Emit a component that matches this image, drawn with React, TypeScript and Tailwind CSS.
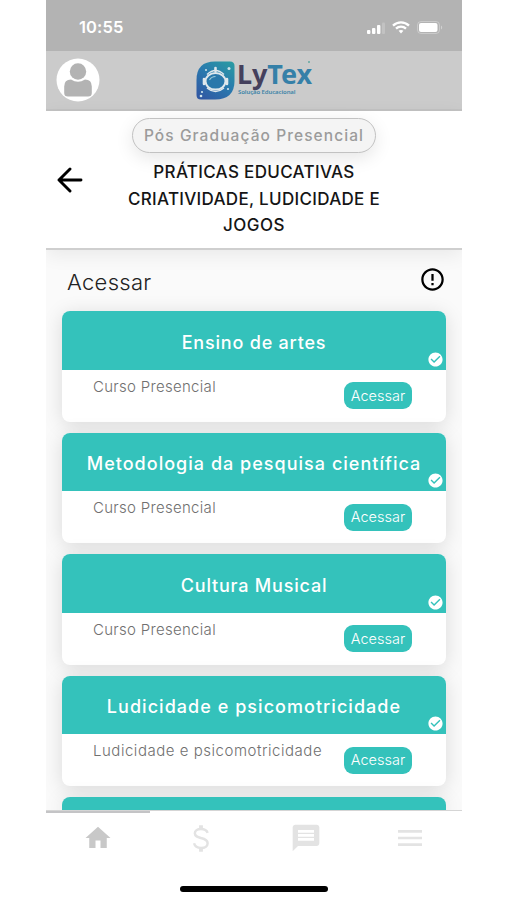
import React from 'react';
import { MdHome, MdMessage, MdErrorOutline, MdCheckCircle, MdMenu } from 'react-icons/md';

interface Course {
  title: string;
  titleClass: string;
  description: string;
  descriptionClass: string;
}

const courses: Course[] = [
  {
    title: 'Ensino de artes',
    titleClass: 'tracking-[0.8px]',
    description: 'Curso Presencial',
    descriptionClass: 'tracking-[0.3px]',
  },
  {
    title: 'Metodologia da pesquisa científica',
    titleClass: 'tracking-[1.02px]',
    description: 'Curso Presencial',
    descriptionClass: 'tracking-[0.3px]',
  },
  {
    title: 'Cultura Musical',
    titleClass: 'tracking-[0.8px]',
    description: 'Curso Presencial',
    descriptionClass: 'tracking-[0.3px]',
  },
  {
    title: 'Ludicidade e psicomotricidade',
    titleClass: 'tracking-[1.04px]',
    description: 'Ludicidade e psicomotricidade',
    descriptionClass: 'tracking-[0.53px]',
  },
];

const StatusBar: React.FC = () => (
  <div className="flex h-[51px] shrink-0 items-center justify-between bg-[#b3b3b3] pt-[4px] pl-[33px] pr-[19px] text-white">
    <span className="text-[16.5px] font-semibold leading-none tracking-[0.1px]">10:55</span>
    <div className="flex items-center gap-[7px]">
      <svg className="h-[12px] w-[18px]" viewBox="0 0 18 12" fill="currentColor">
        <rect x="0" y="8" width="3.4" height="4" rx="1" />
        <rect x="5" y="6" width="3.4" height="6" rx="1" />
        <rect x="10" y="3" width="3.4" height="9" rx="1" />
        <rect x="15" y="0.5" width="3" height="11.5" rx="1" opacity="0.2" />
      </svg>
      <svg className="h-[13px] w-[18px]" viewBox="0 0 18 13" fill="none" stroke="currentColor" strokeWidth="2.3">
        <path d="M1 4.6C5.5 0.2 12.5 0.2 17 4.6" />
        <path d="M4 7.7C6.8 5 11.2 5 14 7.7" />
        <path d="M6.6 9.8C8 8.6 10 8.6 11.4 9.8L9 12.4Z" fill="currentColor" stroke="none" />
      </svg>
      <svg className="h-[13px] w-[26px]" viewBox="0 0 26 13">
        <rect x="0.5" y="0.5" width="22" height="12" rx="3.5" fill="none" stroke="#fff" opacity="0.3" />
        <rect x="2" y="2" width="18.5" height="9" rx="2" fill="#fff" />
        <path d="M24 4.5C25.6 5 25.6 8 24 8.5Z" fill="#fff" opacity="0.4" />
      </svg>
    </div>
  </div>
);

const Logo: React.FC = () => (
  <div className="flex gap-[2px]">
    <svg className="h-[39px] w-[39px]" viewBox="0 0 39 39">
      <defs>
        <linearGradient id="badge" x1="0.9" y1="0" x2="0.2" y2="1">
          <stop offset="0" stopColor="#2a9aa3" />
          <stop offset="0.5" stopColor="#2a79ae" />
          <stop offset="1" stopColor="#3159a3" />
        </linearGradient>
      </defs>
      <path d="M19 0.5H34Q38.5 0.5 38.5 5V20Q38.5 38.5 19 38.5H5Q0.5 38.5 0.5 34V19Q0.5 0.5 19 0.5Z" fill="url(#badge)" />
      <path d="M19.5 7V10" stroke="#dfe7ec" strokeWidth="2.6" strokeLinecap="round" />
      <path d="M11 13.5Q19.5 5.5 28 13.5M11 27Q19.5 34 28 27" fill="none" stroke="#dfe7ec" strokeWidth="1.5" />
      <ellipse cx="19.5" cy="20.3" rx="10" ry="8.3" fill="#2a78ab" stroke="#dfe7ec" strokeWidth="2" />
      <path d="M8 18V23M31 18V23" stroke="#dfe7ec" strokeWidth="2.6" strokeLinecap="round" />
      <path d="M13.5 19Q15.5 15.5 19.5 15.5" fill="none" stroke="#9ecbd8" strokeWidth="1.1" />
      <g fill="#cfe3ea">
        <circle cx="33" cy="7.5" r="1.5" />
        <circle cx="10" cy="9" r="1" />
        <circle cx="6" cy="31" r="1.1" />
        <circle cx="5" cy="35" r="1.3" />
        <circle cx="32" cy="28" r="1.1" />
      </g>
    </svg>
    <div className="relative flex flex-col font-['Noto_Sans',sans-serif]">
      <span className="h-[27px] text-[27px] font-bold leading-[25px] tracking-[-0.1px] text-[#45405c]">
        Ly<span className="text-[#3580a8]">Tex</span>
      </span>
      <span className="pl-[1px] text-[6px] font-semibold leading-[8px] tracking-[-0.1px] text-[#3b84a8]">
        Solução Educacional
      </span>
      <span className="absolute right-[2px] top-0 h-[2px] w-[2px] rounded-full bg-[#62a8a0]" />
    </div>
  </div>
);

const Header: React.FC = () => (
  <header className="grid h-[60px] shrink-0 grid-cols-[1fr_auto_1fr] items-center border-b-2 border-[#c3c3c3] bg-[#cbcbcb] pl-[10px] pr-[10px]">
    <svg className="h-[44px] w-[44px]" viewBox="0 0 44 44">
      <circle cx="22" cy="22" r="21.5" fill="#fff" />
      <circle cx="22" cy="13.5" r="8.2" fill="#b3b3b3" />
      <path d="M8.2 35V28.5Q8.2 21.5 15 21.5Q22 26 29 21.5Q35.8 21.5 35.8 28.5V35Q35.8 38.5 32 38.5H12Q8.2 38.5 8.2 35Z" fill="#b3b3b3" />
    </svg>
    <Logo />
    <span />
  </header>
);

const PageTitle: React.FC = () => (
  <section className="relative z-10 grid h-[139px] shrink-0 grid-cols-[48px_1fr_48px] border-b-2 border-[#cfcfcf] bg-white shadow-[0_5px_18px_rgba(0,0,0,0.07)]">
    <svg className="ml-[11px] mt-[56px] h-[26px] w-[26px]" viewBox="0 0 26 26" fill="none" stroke="#000" strokeWidth="2.9" strokeLinecap="round" strokeLinejoin="round">
      <path d="M24 13H2M13 2L2 13L13 24" />
    </svg>
    <div className="flex flex-col items-center pt-[7px]">
      <div className="flex h-[35px] w-[244px] items-center justify-center rounded-full border-[1.5px] border-[#c2c2c2] bg-[#f4f4f4] text-[15.5px] font-medium tracking-[1.08px] whitespace-nowrap text-[#9b9b9b] shadow-[0_5px_18px_rgba(0,0,0,0.10)]">
        Pós Graduação Presencial
      </div>
      <h1 className="mt-[6px] text-center text-[17px] font-medium leading-[26.5px] whitespace-nowrap text-[#151515]">
        <span className="block tracking-[0.33px]">PRÁTICAS EDUCATIVAS</span>
        <span className="block tracking-[0.31px]">CRIATIVIDADE, LUDICIDADE E</span>
        <span className="block tracking-[0.5px]">JOGOS</span>
      </h1>
    </div>
  </section>
);

const CourseCard: React.FC<{ course: Course }> = ({ course }) => (
  <article className="h-[110.5px] shrink-0 overflow-hidden rounded-[8px] bg-white shadow-[0_3px_20px_rgba(0,0,0,0.13)]">
    <div className="relative flex h-[58.5px] items-center justify-center bg-[#34c2bb] pt-[4px]">
      <h2 className={`text-[18px] font-medium whitespace-nowrap text-white ${course.titleClass}`}>{course.title}</h2>
      <MdCheckCircle className="absolute right-[2px] bottom-[2px] h-[17px] w-[17px] text-white" />
    </div>
    <div className="flex items-start justify-between pl-[31px] pr-[34px]">
      <p className={`pt-[6px] text-[15px] font-light leading-[22px] whitespace-nowrap text-[#707070] ${course.descriptionClass}`}>
        {course.description}
      </p>
      <button className="mt-[12.5px] h-[27px] w-[68px] rounded-[9px] bg-[#34c2bb] text-[14.5px] font-light leading-[26px] text-white">
        Acessar
      </button>
    </div>
  </article>
);

const BottomNav: React.FC = () => (
  <nav className="relative z-10 flex h-[90px] shrink-0 flex-col items-center border-t border-[#d5d5d5] bg-white">
    <div className="h-[2px] w-[104px] self-start bg-[#c4c4c6]" />
    <div className="grid h-[50px] w-full grid-cols-4 place-items-center text-[#e3e3e3]">
      <MdHome className="h-[30px] w-[30px] text-[#c8c8c8]" />
      <svg className="mr-[3px] h-[29px] w-[18px]" viewBox="0 0 19 29" fill="none" stroke="currentColor" strokeWidth="2.6">
        <path d="M16.5 8.5C15.5 5.7 13 4.5 9.5 4.5C5.5 4.5 3 6.3 3 9C3 12.2 6 13 9.5 14C13.5 15 16.5 16.3 16.5 19.5C16.5 22.6 13.7 24.5 9.7 24.5C5.8 24.5 3 22.9 2.2 19.5" />
        <path d="M9.5 0.5V4.5M9.5 24.5V28.5" strokeWidth="4" />
      </svg>
      <MdMessage className="-mt-[1px] h-[32px] w-[32px]" />
      <MdMenu className="-mt-[1px] h-[32px] w-[32px]" />
    </div>
    <div className="mt-[23px] h-[5.5px] w-[148px] rounded-full bg-black" />
  </nav>
);

const App: React.FC = () => {
  return (
    <div className="h-[900px] w-[507px] overflow-hidden bg-white font-['Inter',sans-serif]">
      <div className="ml-[46px] flex h-full w-[416px] flex-col overflow-hidden">
        <StatusBar />
        <Header />
        <PageTitle />
        <main className="min-h-0 flex-1 overflow-hidden bg-[#fafafa] px-[16px]">
          <div className="flex h-[61px] items-start justify-between pl-[5px] pt-[16px]">
            <span className="text-[22px] font-light leading-[32px] tracking-[0.3px] text-[#222]">Acessar</span>
            <MdErrorOutline className="h-[27px] w-[27px] text-black" />
          </div>
          <div className="flex flex-col gap-[11px]">
            {courses.map((course, index) => (
              <CourseCard key={index} course={course} />
            ))}
            {/* Topo do próximo card, atrás do menu inferior */}
            <div className="h-[14px] rounded-t-[8px] bg-[#34c2bb] shadow-[0_3px_20px_rgba(0,0,0,0.13)]" />
          </div>
        </main>
        <BottomNav />
      </div>
    </div>
  );
};

export default App;
